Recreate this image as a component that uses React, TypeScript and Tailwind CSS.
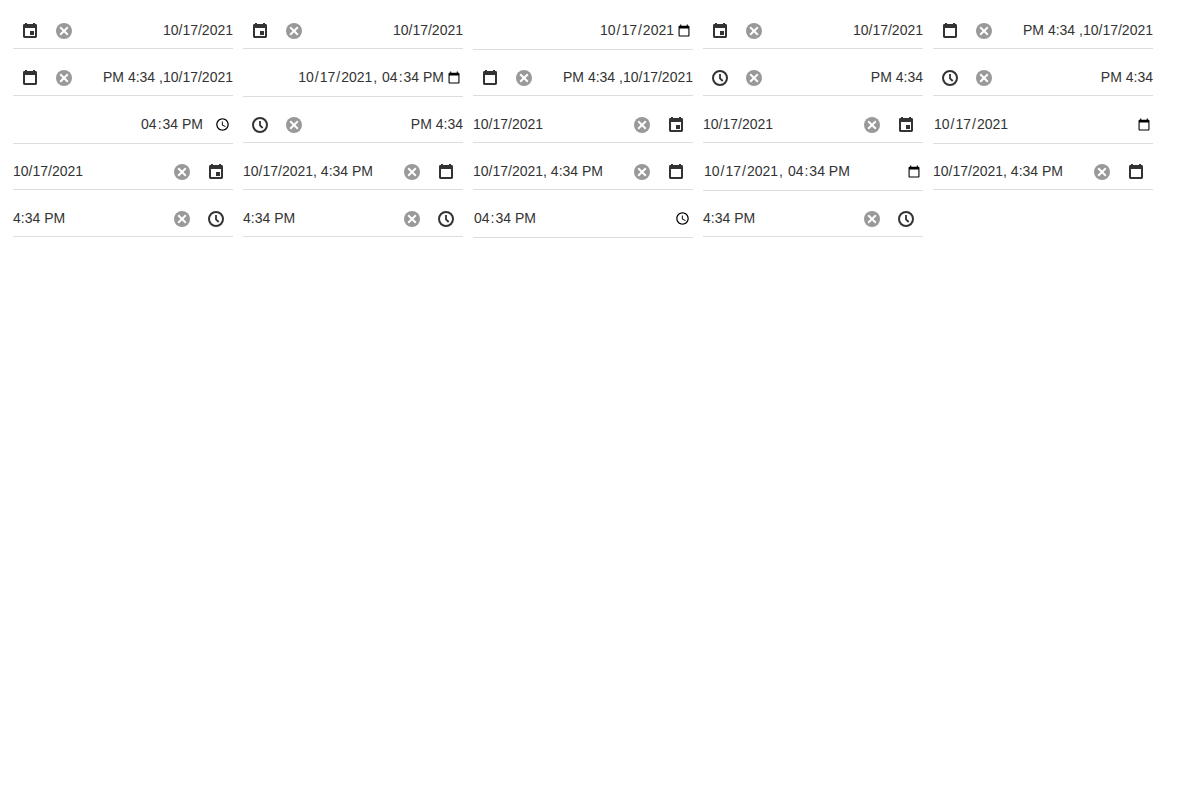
import React from 'react';

type Kind = 'event' | 'calendar' | 'clock';

function Icon({ kind }: { kind: Kind }) {
  if (kind === 'clock') {
    return (
      <svg className="size-4" viewBox="0 0 16 16" fill="none" stroke="#333" strokeWidth="2">
        <circle cx="8" cy="8" r="7" />
        <path d="M8 4v4.300l2.700 2.700" strokeWidth="1.800" />
      </svg>
    );
  }
  return (
    <svg className="size-4" viewBox="0 0 16 16" fill="#333">
      <path fillRule="evenodd" d="M3 0h2v1h6V0h2v1h.6A1.4 1.4 0 0 1 15 2.4v11.2a1.4 1.4 0 0 1-1.4 1.4H2.4A1.4 1.4 0 0 1 1 13.600V2.400A1.4 1.4 0 0 1 2.400 1H3zM3 5v8h10V5z" />
      {kind === 'event' && <path d="M8 8h4v4H8z" />}
    </svg>
  );
}

function Clear() {
  return (
    <svg className="size-4" viewBox="0 0 16 16">
      <circle cx="8" cy="8" r="8" fill="#999" />
      <path d="M4.200 4.200l7.600 7.600M11.800 4.200l-7.600 7.600" stroke="#fff" strokeWidth="2" />
    </svg>
  );
}

function Box({ kind, text, rtl }: { kind: Kind; text: string; rtl?: boolean }) {
  return (
    <div className={`flex h-9 w-[220px] border-b border-[#ddd] ${rtl ? 'flex-row-reverse' : ''}`}>
      <span className={`grow whitespace-nowrap pt-[9px] leading-4 ${rtl ? 'text-right' : 'text-left'}`}>{text}</span>
      <span className="flex w-[34px] justify-center pt-[10px]"><Clear /></span>
      <span className="flex w-[34px] justify-center pt-[10px]"><Icon kind={kind} /></span>
    </div>
  );
}

function Native({ type, rtl }: { type: 'date' | 'datetime' | 'time'; rtl?: boolean }) {
  const date = ['10', '/', '17', '/', '2021'];
  const time = ['04', ':', '34', ' ', 'PM'];
  const parts = type === 'date' ? date : type === 'time' ? time : [...date, ', ', ...time];
  return (
    <div className="flex h-[37px] w-[220px] border-b border-[#ddd]">
      <span className={`flex grow whitespace-pre pt-[9px] leading-4 ${rtl ? 'justify-end' : ''}`}>
        {parts.map((p, i) => (
          <span key={i} className={/\w/.test(p) ? (p === 'PM' ? '-ml-px pr-px' : 'px-px') : ''}>{p}</span>
        ))}
      </span>
      {type === 'time' ? (
        <svg className="mt-[10px] mr-[3px] ml-[11px] size-[15px]" viewBox="0 0 24 24">
          <path d="M11.990 2C6.470 2 2 6.480 2 12s4.470 10 9.990 10C17.520 22 22 17.520 22 12S17.520 2 11.990 2zM12 20c-4.420 0-8-3.580-8-8s3.580-8 8-8 8 3.580 8 8-3.580 8-8 8zM12.500 7H11v6l5.250 3.150.750-1.230-4.500-2.670z" />
        </svg>
      ) : (
        <svg className="mt-[11.4375px] mr-[2px] ml-[2px] h-[13.125px] w-[14px]" viewBox="0 0 24 24">
          <path d="M20 3h-1V1h-2v2H7V1H5v2H4c-1.100 0-2 .900-2 2v16c0 1.100.900 2 2 2h16c1.100 0 2-.900 2-2V5c0-1.100-.900-2-2-2zm0 18H4V8h16v13z" />
        </svg>
      )}
    </div>
  );
}

export default function App() {
  return (
    <main className="grid min-h-screen auto-rows-[37px] grid-cols-[repeat(5,220px)] content-start gap-[10px] bg-white p-[13px] font-['Liberation_Sans',Arial,sans-serif] text-[14px] text-[#333]">
      <Box rtl kind="event" text="10/17/2021" />
      <Box rtl kind="event" text="10/17/2021" />
      <Native rtl type="date" />
      <Box rtl kind="event" text="10/17/2021" />
      <Box rtl kind="calendar" text="PM 4:34 ,10/17/2021" />
      <Box rtl kind="calendar" text="PM 4:34 ,10/17/2021" />
      <Native rtl type="datetime" />
      <Box rtl kind="calendar" text="PM 4:34 ,10/17/2021" />
      <Box rtl kind="clock" text="PM 4:34" />
      <Box rtl kind="clock" text="PM 4:34" />
      <Native rtl type="time" />
      <Box rtl kind="clock" text="PM 4:34" />
      <Box kind="event" text="10/17/2021" />
      <Box kind="event" text="10/17/2021" />
      <Native type="date" />
      <Box kind="event" text="10/17/2021" />
      <Box kind="calendar" text="10/17/2021, 4:34 PM" />
      <Box kind="calendar" text="10/17/2021, 4:34 PM" />
      <Native type="datetime" />
      <Box kind="calendar" text="10/17/2021, 4:34 PM" />
      <Box kind="clock" text="4:34 PM" />
      <Box kind="clock" text="4:34 PM" />
      <Native type="time" />
      <Box kind="clock" text="4:34 PM" />
    </main>
  );
}
